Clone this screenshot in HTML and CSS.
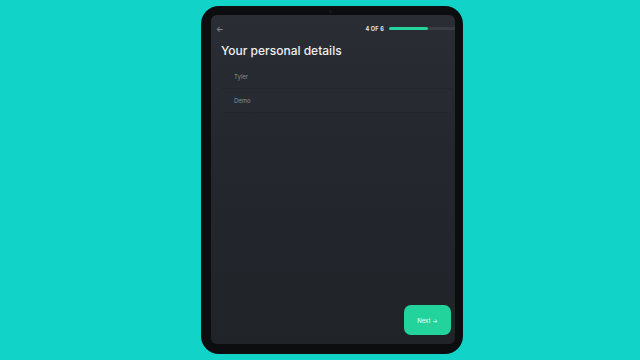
FILE: index.html
```html
<!DOCTYPE html>
<html lang="en">

<head>
  <meta charset="UTF-8" />
  <meta name="viewport" content="width=device-width, initial-scale=1.0" />
  <title>Your personal details</title>
  <link rel="stylesheet" href="styles.css">
</head>

<body>
  <!-- 平板外框 -->
  <div class="tablet">
    <div class="camera"></div>
    <div class="screen">
      <!-- 顶部：返回 + 步骤进度 -->
      <div class="top">
        <span class="back">&larr;</span>
        <span class="step">4 OF 6</span>
        <div class="bar"><div class="fill"></div></div>
      </div>

      <h1 class="title">Your personal details</h1>

      <div class="fields">
        <div class="field">Tyler</div>
        <div class="field">Demo</div>
      </div>

      <button class="next">Next &rarr;</button>
    </div>
  </div>
</body>

</html>
```

FILE: styles.css
```css
* {
  margin: 0;
  padding: 0;
  box-sizing: border-box;
}

body {
  width: 640px;
  height: 360px;
  overflow: hidden;
  background: #11d3c8;
  font-family: 'Inter', 'Noto Sans', sans-serif;
}

.tablet {
  position: relative;
  width: 262px;
  height: 348px;
  margin: 6px 0 0 201px;
  padding: 9px 8px 10px 10px;
  background: #0c0d0f;
  border-radius: 18px;
}

.camera {
  position: absolute;
  top: 4px;
  left: 128px;
  width: 3px;
  height: 3px;
  border-radius: 50%;
  background: #17191c;
}

.screen {
  display: flex;
  flex-direction: column;
  height: 100%;
  background: linear-gradient(#2a2d34, #24272d 40%, #202328);
  border-radius: 6px;
  overflow: hidden;
  padding-bottom: 9px;
}

.top {
  display: flex;
  align-items: center;
  height: 27px;
  padding-left: 5px;
}

.back {
  color: #9a9ca1;
  font-size: 8px;
  line-height: 1;
}

.step {
  margin-left: auto;
  color: #e6e8ea;
  font-size: 5.5px;
  font-weight: 700;
  letter-spacing: 0.2px;
}

.bar {
  width: 66px;
  height: 3px;
  margin-left: 5px;
  background: #3a3d44;
  border-radius: 2px 0 0 2px;
}

.bar .fill {
  width: 39px;
  height: 100%;
  background: #25d39b;
  border-radius: 2px;
}

.title {
  padding-left: 10px;
  margin-top: 1px;
  color: #eef0f1;
  font-size: 12px;
  font-weight: 500;
  letter-spacing: 0;
}

.fields {
  margin: 7px 3px 0 10px;
}

.field {
  height: 24px;
  line-height: 24px;
  padding-left: 13px;
  color: #8d9096;
  font-size: 6px;
  background: #272a31;
  border-bottom: 1px solid #23262c;
}

.next {
  align-self: flex-end;
  margin-top: auto;
  margin-right: 4px;
  width: 47px;
  height: 30px;
  border: none;
  border-radius: 7px;
  background: #22d39c;
  color: #f4fffb;
  font: 400 6px 'Inter', 'Noto Sans', sans-serif;
}
```
